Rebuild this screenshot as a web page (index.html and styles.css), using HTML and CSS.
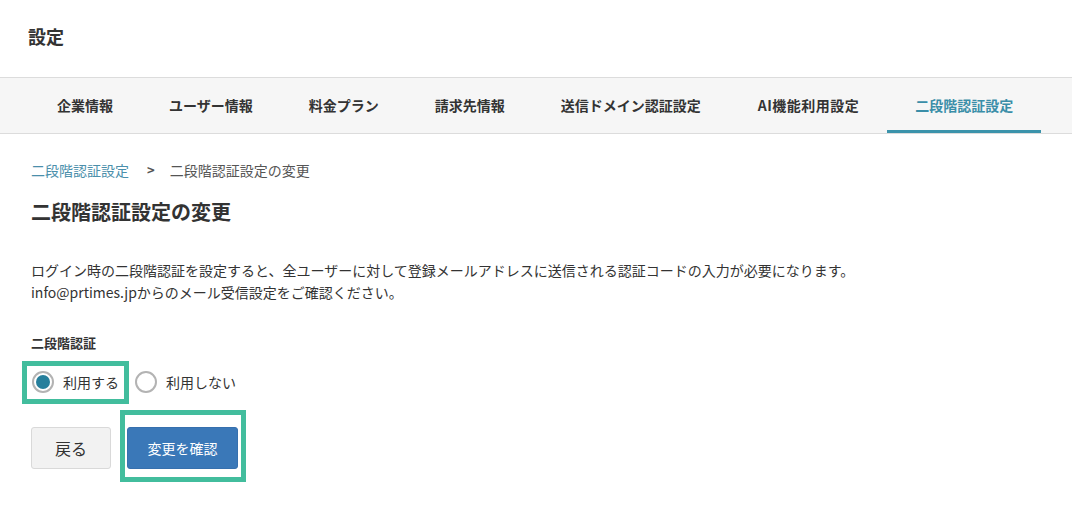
FILE: index.html
```html
<!DOCTYPE html>
<html lang="ja">
<head>
<meta charset="utf-8">
<title>設定</title>
<link rel="stylesheet" href="styles.css">
</head>
<body>
<header class="header">
  <h1 class="title">設定</h1>
</header>
<nav class="tabs">
  <a class="tab">企業情報</a>
  <a class="tab">ユーザー情報</a>
  <a class="tab">料金プラン</a>
  <a class="tab">請求先情報</a>
  <a class="tab">送信ドメイン認証設定</a>
  <a class="tab tab-ai">AI機能利用設定</a>
  <a class="tab tab-active">二段階認証設定</a>
</nav>
<main class="main">
  <div class="breadcrumb">
    <a class="crumb-link">二段階認証設定</a>
    <span class="crumb-sep">&gt;</span>
    <span class="crumb-current">二段階認証設定の変更</span>
  </div>
  <h2 class="heading">二段階認証設定の変更</h2>
  <p class="desc">ログイン時の二段階認証を設定すると、全ユーザーに対して登録メールアドレスに送信される認証コードの入力が必要になります。<br>info@prtimes.jpからのメール受信設定をご確認ください。</p>
  <div class="field-label">二段階認証</div>
  <div class="radios">
    <label class="radio radio-highlight"><span class="dot dot-on"></span>利用する</label>
    <label class="radio"><span class="dot"></span>利用しない</label>
  </div>
  <div class="actions">
    <button class="btn btn-back">戻る</button>
    <span class="btn-wrap btn-highlight"><button class="btn btn-primary">変更を確認</button></span>
  </div>
</main>
</body>
</html>
```
FILE: styles.css
```css
* { box-sizing: border-box; }
html, body { min-height: 100%; }
body {
  margin: 0;
  background: #fff;
  color: #333;
  font-family: "Noto Sans CJK JP", "Noto Sans", sans-serif;
}
.header {
  height: 77px;
  display: flex;
  align-items: center;
  padding-left: 28px;
  padding-bottom: 5px;
}
.title {
  margin: 0;
  font-size: 18px;
  line-height: 24px;
  font-weight: 700;
  color: #333;
}
.tabs {
  display: flex;
  background: #f6f6f6;
  border-top: 1px solid #dcdcdc;
  border-bottom: 1px solid #dcdcdc;
  padding-left: 29px;
  height: 57px;
}
.tab {
  position: relative;
  padding: 0 28px;
  font-size: 14px;
  line-height: 55px;
  font-weight: 700;
  color: #333;
  white-space: nowrap;
}
.tab-ai { letter-spacing: 0.5px; padding-left: 29px; }
.tab-active { color: #3a8ea8; }
.tab-active::after {
  content: "";
  position: absolute;
  left: 0;
  right: 0;
  bottom: 0;
  height: 3px;
  background: #3b93ab;
}
.main { padding: 0 31px 36px; }
.breadcrumb {
  margin-top: 26px;
  font-size: 14px;
  line-height: 20px;
  display: flex;
  align-items: center;
}
.crumb-link { color: #4b8fab; }
.crumb-sep {
  margin: 0 15px 0 18px;
  color: #555;
  font-weight: 700;
  font-size: 13px;
}
.crumb-current { color: #555; }
.heading {
  margin: 18px 0 0;
  font-size: 20px;
  line-height: 28px;
  font-weight: 700;
  color: #333;
}
.desc {
  margin: 33px 0 0;
  font-size: 14px;
  line-height: 22px;
  color: #333;
}
.field-label {
  margin-top: 30px;
  font-size: 13px;
  line-height: 20px;
  font-weight: 700;
  color: #333;
}
.radios {
  margin-top: 17px;
  display: flex;
  align-items: center;
  height: 24px;
}
.radio {
  position: relative;
  display: flex;
  align-items: center;
  font-size: 14px;
  line-height: 24px;
  color: #333;
}
.radio + .radio { margin-left: 16px; }
.radio-highlight { margin-left: 1px; }
.dot {
  width: 22px;
  height: 22px;
  border: 2px solid #b3b3b3;
  border-radius: 50%;
  background: #fff;
  margin-right: 9px;
  position: relative;
}
.dot-on::after {
  content: "";
  position: absolute;
  inset: 2px;
  border-radius: 50%;
  background: #267f9c;
}
.radio-highlight::after {
  content: "";
  position: absolute;
  left: -10px;
  right: -10px;
  top: -9px;
  bottom: -10px;
  border: 5px solid #42bd9d;
  pointer-events: none;
}
.actions {
  margin-top: 33px;
  display: flex;
  gap: 16px;
}
.btn {
  height: 42px;
  border-radius: 3px;
  font-family: inherit;
  cursor: pointer;
}
.btn-back {
  width: 80px;
  background: #f2f2f2;
  border: 1px solid #d9d9d9;
  color: #333;
  font-size: 16px;
}
.btn-wrap {
  position: relative;
  display: block;
}
.btn-primary {
  display: block;
  width: 111px;
  background: #3a78b8;
  border: 1px solid #3670ae;
  color: #fff;
  font-size: 14px;
}
.btn-highlight::after {
  content: "";
  position: absolute;
  left: -7px;
  right: -8px;
  top: -17px;
  bottom: -13px;
  border: 5px solid #42bd9d;
  pointer-events: none;
}
```
